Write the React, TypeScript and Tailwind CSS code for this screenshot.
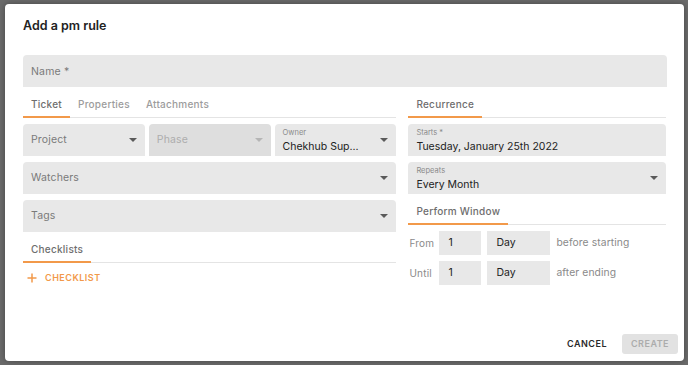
import React from "react";

const orange = "bg-[#f2994a]";

function Caret({ light }: { light?: boolean }) {
  return (
    <svg width="8" height="4" viewBox="0 0 8 4" className="shrink-0">
      <path d="M0 0 L4 4 L8 0 Z" fill={light ? "#b5b5b5" : "#5a5a5a"} />
    </svg>
  );
}

function Tab({ label, active }: { label: string; active?: boolean }) {
  return (
    <div className="relative flex h-full items-center px-[8px] pt-[3px]">
      <span
        className={`text-[10px] font-medium tracking-[0.25px] ${active ? "text-[#6e6e6e]" : "text-[#9c9c9c]"}`}
      >
        {label}
      </span>
      {active && <span className={`absolute bottom-[-1px] left-0 right-0 h-[2px] ${orange}`} />}
    </div>
  );
}

function Select({ text, disabled, label, value }: { text?: string; disabled?: boolean; label?: string; value?: string }) {
  return (
    <div
      className={`flex h-[32px] items-center justify-between rounded-t-[4px] pl-[8px] pr-[8px] ${
        disabled ? "bg-[#dedede]" : "bg-[#e8e8e8]"
      }`}
    >
      {label ? (
        <div className="flex flex-col self-start pt-[5px]">
          <span className="text-[7.5px] leading-[8px] text-[#8a8a8a]">{label}</span>
          <span className="mt-[3px] whitespace-nowrap text-[10.5px] leading-[14px] text-[#222]">{value}</span>
        </div>
      ) : (
        <span className={`text-[10.5px] tracking-[0.15px] ${disabled ? "text-[#adadad]" : "text-[#7a7a7a]"}`}>
          {text}
        </span>
      )}
      <Caret light={disabled} />
    </div>
  );
}

function WindowRow({ word, after }: { word: string; after: string }) {
  return (
    <div className="flex h-[24px] items-center">
      <span className="w-[31px] pl-[1px] text-[10px] tracking-[0.2px] text-[#8a8a8a]">{word}</span>
      <div className="flex h-full w-[42px] items-center bg-[#e8e8e8] pl-[9px] text-[10.5px] text-[#222]">1</div>
      <div className="ml-[6px] flex h-full w-[63px] items-center bg-[#e8e8e8] pl-[9px] text-[10.5px] text-[#222]">
        Day
      </div>
      <span className="ml-[6px] text-[10.3px] tracking-[0.1px] text-[#8a8a8a]">{after}</span>
    </div>
  );
}

export default function App() {
  return (
    <div
      className="h-[365px] w-[688px] overflow-hidden bg-[#6b6b6b] pl-[5px] pt-[4px]"
      style={{ fontFamily: "Inter, 'Noto Sans', sans-serif" }}
    >
      <div className="flex h-[357px] w-[679px] flex-col rounded-[4px] bg-white shadow-[0_0_6px_rgba(0,0,0,0.35)]">
        <div className="px-[18px] pt-[12px]">
          <h1 className="h-[20px] text-[12.5px] font-semibold leading-[20px] text-[#222]">Add a pm rule</h1>
          <div className="mt-[19px] flex h-[32px] w-[644px] items-center rounded-t-[4px] bg-[#e8e8e8] pl-[8px] pt-[2px]">
            <span className="text-[10.5px] tracking-[0.2px] text-[#7a7a7a]">Name *</span>
          </div>

          <div className="mt-[1px] flex gap-[12px]">
            {/* left column */}
            <div className="w-[374px]">
              <div className="flex h-[30px] border-b border-[#e4e4e4]">
                <Tab label="Ticket" active />
                <Tab label="Properties" />
                <Tab label="Attachments" />
              </div>
              <div className="mt-[6px] grid grid-cols-3 gap-[4px]">
                <Select text="Project" />
                <Select text="Phase" disabled />
                <Select label="Owner" value="Chekhub Sup..." />
              </div>
              <div className="mt-[6px]">
                <Select text="Watchers" />
              </div>
              <div className="mt-[6px]">
                <Select text="Tags" />
              </div>
              <div className="mt-[1px] flex h-[30px] border-b border-[#e4e4e4]">
                <Tab label="Checklists" active />
              </div>
              <div className="mt-[8px] flex items-center pl-[4px]">
                <svg width="10" height="10" viewBox="0 0 10 10" className="shrink-0">
                  <path d="M5 0.5 V9.5 M0.5 5 H9.5" stroke="#f2994a" strokeWidth="1.5" fill="none" />
                </svg>
                <span className="ml-[8px] text-[9px] font-semibold tracking-[0.5px] text-[#f2994a]">CHECKLIST</span>
              </div>
            </div>

            {/* right column */}
            <div className="w-[258px]">
              <div className="flex h-[30px] border-b border-[#e4e4e4]">
                <Tab label="Recurrence" active />
              </div>
              <div className="mt-[6px]">
                <div className="flex h-[32px] flex-col rounded-t-[4px] bg-[#e8e8e8] pl-[8px] pt-[5px]">
                  <span className="text-[7.5px] leading-[8px] text-[#8a8a8a]">Starts *</span>
                  <span className="mt-[3px] whitespace-nowrap text-[10.5px] leading-[14px] text-[#222]">
                    Tuesday, January 25th 2022
                  </span>
                </div>
              </div>
              <div className="mt-[6px]">
                <Select label="Repeats" value="Every Month" />
              </div>
              <div className="mt-[1px] flex h-[30px] border-b border-[#e4e4e4]">
                <Tab label="Perform Window" active />
              </div>
              <div className="mt-[6px] flex flex-col gap-[6px]">
                <WindowRow word="From" after="before starting" />
                <WindowRow word="Until" after="after ending" />
              </div>
            </div>
          </div>
        </div>

        <div className="mt-auto flex items-center justify-end gap-[15px] pb-[7px] pr-[6px]">
          <span className="text-[9px] font-semibold tracking-[0.5px] text-[#2a2a2a]">CANCEL</span>
          <div className="flex h-[20px] w-[56px] items-center justify-center rounded-[3px] bg-[#e2e2e2]">
            <span className="text-[9px] font-semibold tracking-[0.5px] text-[#acacac]">CREATE</span>
          </div>
        </div>
      </div>
    </div>
  );
}
